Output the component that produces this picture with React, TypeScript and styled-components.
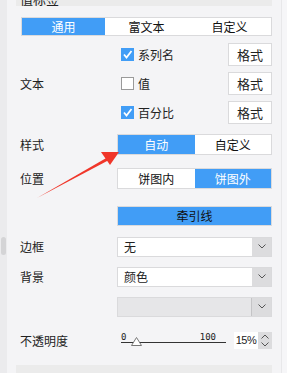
import styled, { createGlobalStyle } from "styled-components";

const Global = createGlobalStyle`
  html, body {
    margin: 0;
    padding: 0;
    background: #f4f4f6;
    font-family: "Noto Sans CJK SC", "Microsoft YaHei", sans-serif;
    font-size: 12px;
    color: #222;
  }
`;

const BLUE = "#419df6";

const Page = styled.div`
  position: relative;
  display: flex;
  width: 287px;
  height: 373px;
  overflow: hidden;
`;

const ScrollTrack = styled.div`
  width: 7px;
  background: #ebebed;
  padding-top: 237px;
  box-sizing: border-box;
`;

const ScrollThumb = styled.div`
  width: 5px;
  height: 18px;
  margin-left: 1px;
  border-radius: 3px;
  background: #d4d4d6;
`;

const Panel = styled.div`
  width: 256px;
  margin-left: 9px;
  display: flex;
  flex-direction: column;
`;

const SideGap = styled.div`
  flex: 1;
  margin-left: 9px;
  border-left: 1px solid #e8e8ea;
  background: #f6f6f8;
`;

const Band = styled.div`
  height: 7px;
  background: #ebebeb;
  overflow: hidden;
  padding-left: 4px;
  font-size: 13px;
  line-height: 14px;
  span {
    display: block;
    margin-top: -8px;
  }
`;

const BottomBand = styled.div`
  margin-top: 15px;
  height: 10px;
  background: #ebebeb;
`;

const Tabs = styled.div`
  display: flex;
  margin: 11px 0 0 5px;
  height: 21px;
  border: 1px solid #dadadc;
  box-sizing: border-box;
  background: #fff;
`;

const Tab = styled.div<{ $on?: boolean }>`
  flex: 1;
  display: flex;
  align-items: center;
  justify-content: center;
  background: ${(p) => (p.$on ? BLUE : "#fff")};
  color: ${(p) => (p.$on ? "#fff" : "#111")};
`;

const Row = styled.div<{ $mt: number }>`
  display: grid;
  grid-template-columns: 101px 155px;
  margin-top: ${(p) => p.$mt}px;
  align-items: center;
`;

const Label = styled.div`
  padding-left: 4px;
  color: #222;
`;

const Checks = styled.div`
  display: flex;
  flex-direction: column;
  gap: 6px;
`;

const CheckRow = styled.div`
  display: flex;
  align-items: center;
  height: 23px;
`;

const Box = styled.span<{ $on?: boolean }>`
  width: 13px;
  height: 13px;
  box-sizing: border-box;
  margin-left: 4px;
  margin-right: 4px;
  background: ${(p) => (p.$on ? BLUE : "#fff")};
  border: 1px solid ${(p) => (p.$on ? BLUE : "#9a9a9a")};
  display: flex;
  align-items: center;
  justify-content: center;
`;

const FormatBtn = styled.div`
  margin-left: auto;
  width: 44px;
  height: 23px;
  box-sizing: border-box;
  border: 1px solid #dadadc;
  background: #fff;
  display: flex;
  align-items: center;
  justify-content: center;
  font-size: 13px;
`;

const Segment = styled.div`
  display: flex;
  height: 21px;
  border: 1px solid #dadadc;
  box-sizing: border-box;
  background: #fff;
`;

const WideBtn = styled.div`
  height: 20px;
  border: 1px solid #dadadc;
  box-sizing: border-box;
  background: ${BLUE};
  display: flex;
  align-items: center;
  justify-content: center;
  color: #111;
`;

const Select = styled.div<{ $off?: boolean }>`
  display: flex;
  height: 20px;
  border: 1px solid #dadadc;
  box-sizing: border-box;
  background: ${(p) => (p.$off ? "#e6e6e8" : "#fff")};
`;

const SelectText = styled.div<{ $off?: boolean }>`
  flex: 1;
  padding-left: 6px;
  display: flex;
  align-items: center;
  border-right: 1px solid ${(p) => (p.$off ? "#c4c4c6" : "transparent")};
`;

const Arrow = styled.div`
  width: 19px;
  background: #dcdcde;
  display: flex;
  align-items: center;
  justify-content: center;
`;

const SliderRow = styled.div`
  display: flex;
  align-items: center;
`;

const Slider = styled.div`
  position: relative;
  width: 106px;
  height: 19px;
  margin-left: 4px;
  font-family: "DejaVu Sans Mono", monospace;
  font-size: 9px;
  color: #222;
`;

const SliderTicks = styled.div`
  display: flex;
  justify-content: space-between;
  padding-right: 10px;
  line-height: 10px;
  margin-top: 1px;
`;

const SliderLine = styled.div`
  height: 1px;
  background: #333;
`;

const Thumb = styled.svg`
  position: absolute;
  left: 10px;
  top: 6px;
`;

const Spin = styled.div`
  display: flex;
  margin-left: 8px;
  height: 17px;
`;

const SpinInput = styled.div`
  width: 24px;
  background: #fff;
  display: flex;
  align-items: center;
  justify-content: center;
  font-family: "Liberation Sans Narrow", "Liberation Sans", sans-serif;
  font-size: 11px;
  letter-spacing: -0.5px;
`;

const SpinBtns = styled.div`
  width: 14px;
  background: #dcdcde;
  display: flex;
  flex-direction: column;
  align-items: center;
  justify-content: space-around;
`;

const Annot = styled.svg`
  position: absolute;
  left: 0;
  top: 0;
  pointer-events: none;
`;

const Check = () => (
  <svg width="11" height="11" viewBox="0 0 11 11">
    <path d="M2 5.5 L4.5 8.5 L9.5 2" stroke="#fff" strokeWidth="1.8" fill="none" />
  </svg>
);

const Chev = ({ up }: { up?: boolean }) => (
  <svg width="8" height="5" viewBox="0 0 8 5">
    <path
      d={up ? "M0.5 4.5 L4 1 L7.5 4.5" : "M0.5 0.5 L4 4 L7.5 0.5"}
      stroke="#555"
      strokeWidth="1"
      fill="none"
    />
  </svg>
);

export default function App() {
  return (
    <Page>
      <Global />
      <ScrollTrack>
        <ScrollThumb />
      </ScrollTrack>
      <Panel>
        <Band>
          <span>值标签</span>
        </Band>
        <Tabs>
          <Tab $on>通用</Tab>
          <Tab>富文本</Tab>
          <Tab>自定义</Tab>
        </Tabs>
        <Row $mt={7}>
          <Label>文本</Label>
          <Checks>
            <CheckRow>
              <Box $on>
                <Check />
              </Box>
              系列名
              <FormatBtn>格式</FormatBtn>
            </CheckRow>
            <CheckRow>
              <Box />
              值<FormatBtn>格式</FormatBtn>
            </CheckRow>
            <CheckRow>
              <Box $on>
                <Check />
              </Box>
              百分比
              <FormatBtn>格式</FormatBtn>
            </CheckRow>
          </Checks>
        </Row>
        <Row $mt={10}>
          <Label>样式</Label>
          <Segment>
            <Tab $on>自动</Tab>
            <Tab>自定义</Tab>
          </Segment>
        </Row>
        <Row $mt={13}>
          <Label>位置</Label>
          <Segment>
            <Tab>饼图内</Tab>
            <Tab $on>饼图外</Tab>
          </Segment>
        </Row>
        <Row $mt={17}>
          <div />
          <WideBtn>牵引线</WideBtn>
        </Row>
        <Row $mt={11}>
          <Label>边框</Label>
          <Select>
            <SelectText>无</SelectText>
            <Arrow>
              <Chev />
            </Arrow>
          </Select>
        </Row>
        <Row $mt={10}>
          <Label>背景</Label>
          <Select>
            <SelectText>颜色</SelectText>
            <Arrow>
              <Chev />
            </Arrow>
          </Select>
        </Row>
        <Row $mt={10}>
          <div />
          <Select $off>
            <SelectText $off />
            <Arrow>
              <Chev />
            </Arrow>
          </Select>
        </Row>
        <Row $mt={14}>
          <Label>不透明度</Label>
          <SliderRow>
            <Slider>
              <SliderTicks>
                <span>0</span>
                <span>100</span>
              </SliderTicks>
              <SliderLine />
              <Thumb width="11" height="9" viewBox="0 0 11 9">
                <path d="M5.5 0.5 L10.5 8.5 L0.5 8.5 Z" fill="#fff" stroke="#777" />
              </Thumb>
            </Slider>
            <Spin>
              <SpinInput>15%</SpinInput>
              <SpinBtns>
                <Chev up />
                <Chev />
              </SpinBtns>
            </Spin>
          </SliderRow>
        </Row>
        <BottomBand />
      </Panel>
      <SideGap />
      <Annot width="287" height="373">
        <path d="M37 198 L108 157 L109 160 Z" fill="#f0362a" />
        <path d="M119 152 L101 152 L110 165 Z" fill="#f0362a" />
      </Annot>
    </Page>
  );
}
